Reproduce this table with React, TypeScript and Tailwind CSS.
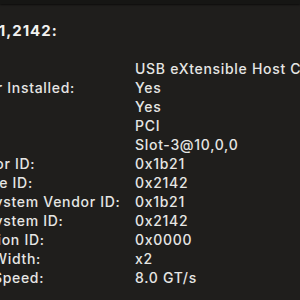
import React from "react";

const rows: [string, string][] = [
  ["Type:", "USB eXtensible Host Controller"],
  ["Driver Installed:", "Yes"],
  ["MSI:", "Yes"],
  ["Bus:", "PCI"],
  ["Slot:", "Slot-3@10,0,0"],
  ["Vendor ID:", "0x1b21"],
  ["Device ID:", "0x2142"],
  ["Subsystem Vendor ID:", "0x1b21"],
  ["Subsystem ID:", "0x2142"],
  ["Revision ID:", "0x0000"],
  ["Link Width:", "x2"],
  ["Link Speed:", "8.0 GT/s"],
];

export default function App() {
  return (
    <div className="w-[300px] h-[300px] overflow-hidden bg-[#1f1e1c] font-['Inter',sans-serif] text-[14px] font-medium tracking-[0.7px] text-[#e6e6e4]">
      <div className="h-[4px] bg-[#161614] shadow-[0_1px_2px_rgba(0,0,0,0.6)]" />
      <div className="pt-[17px]">
        <div className="ml-[-55px] text-[15px] font-bold tracking-[1px] leading-[19px] text-[#f2f2f0] whitespace-nowrap">
          pci1b21,2142:
        </div>
        <div className="mt-[19px] ml-[-42px] grid grid-cols-[177px_1fr] leading-[19px] whitespace-nowrap">
          {rows.map(([k, v]) => (
            <React.Fragment key={k}>
              <div>{k}</div>
              <div>{v}</div>
            </React.Fragment>
          ))}
        </div>
      </div>
    </div>
  );
}
